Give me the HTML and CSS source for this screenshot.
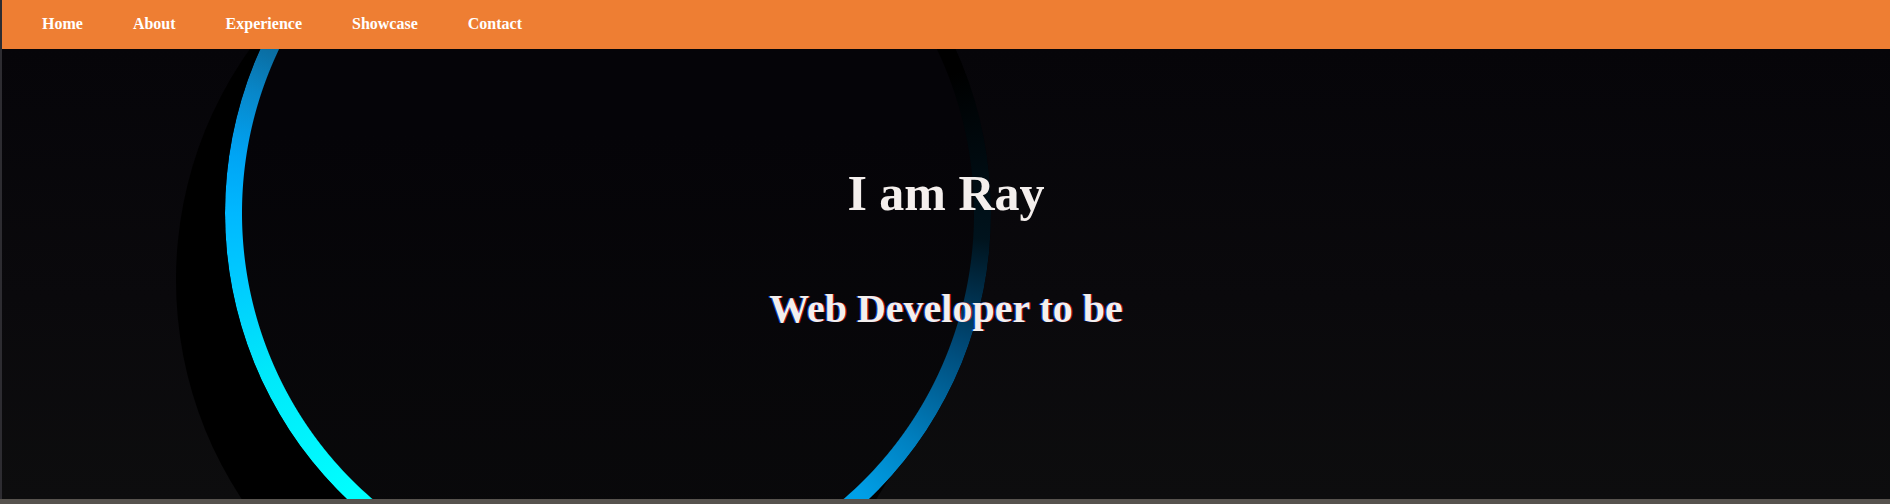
FILE: index.html
```
<!DOCTYPE html>
<html lang="en">
<head>
<meta charset="utf-8">
<title>Ray</title>
<link rel="stylesheet" href="styles.css">
</head>
<body>
<div class="page">
  <nav class="nav">
    <ul class="nav-list">
      <li><a href="#home">Home</a></li>
      <li><a href="#about">About</a></li>
      <li><a href="#experience">Experience</a></li>
      <li><a href="#showcase">Showcase</a></li>
      <li><a href="#contact">Contact</a></li>
    </ul>
  </nav>
  <section class="hero" id="home">
    <div class="orb"></div>
    <div class="intro">
      <h1 class="title">I am Ray</h1>
      <h2 class="subtitle">Web Developer to be</h2>
    </div>
  </section>
</div>
</body>
</html>
```
FILE: styles.css
```
* { box-sizing: border-box; }
html, body { margin: 0; padding: 0; }
body {
  background: #57534e;
  font-family: "Liberation Serif", "Times New Roman", serif;
  width: 1890px;
  height: 504px;
  overflow: hidden;
}
.page {
  border-left: 2px solid #2d2c31;
  height: 499px;
  display: flex;
  flex-direction: column;
}
.nav {
  height: 49px;
  background: #ee7e33;
  display: flex;
  align-items: center;
  flex: none;
}
.nav-list {
  list-style: none;
  margin: 0;
  padding: 0 0 2px 40px;
  display: flex;
  gap: 50px;
}
.nav-list a {
  color: #fff;
  text-decoration: none;
  font-weight: bold;
  font-size: 16px;
}
.hero {
  position: relative;
  flex: 1;
  overflow: hidden;
  background: linear-gradient(to bottom, #060509 0%, #0a090c 55%, #0d0d0e 100%);
}
.orb {
  position: absolute;
  left: 223px;
  top: -227px;
  width: 766px;
  height: 782px;
  border-radius: 50%;
  background: linear-gradient(to bottom, #050408 40%, #0a0a0b 100%);
  box-shadow: -49px 67px 0 #000;
}
.orb::before {
  content: "";
  position: absolute;
  inset: 0;
  border-radius: 50%;
  background: conic-gradient(#000 0deg, #000 68deg, #00131d 94deg, #004a78 111deg, #0080c0 127deg, #009fe6 138deg, #00d2fa 185deg, #00ffff 222deg, #00e8fa 245deg, #00c8ff 261deg, #00b8ff 270deg, #00a4f4 279deg, #0886c8 289deg, #0a70a6 295deg, #043048 320deg, #000 345deg);
  -webkit-mask: radial-gradient(farthest-side, transparent calc(100% - 17.5px), #000 calc(100% - 16.5px));
  mask: radial-gradient(farthest-side, transparent calc(100% - 17.5px), #000 calc(100% - 16.5px));
}
.intro {
  position: relative;
  padding-top: 119px;
  text-align: center;
  color: #f4efed;
}
.title {
  margin: 0;
  font-size: 50px;
  line-height: 1;
  font-weight: bold;
}
.subtitle {
  margin: 71px 0 0;
  font-size: 40px;
  line-height: 1;
  font-weight: bold;
  text-shadow: -1px 0 rgba(20, 90, 255, 0.75), 1px 0 rgba(230, 20, 20, 0.75);
}
```
